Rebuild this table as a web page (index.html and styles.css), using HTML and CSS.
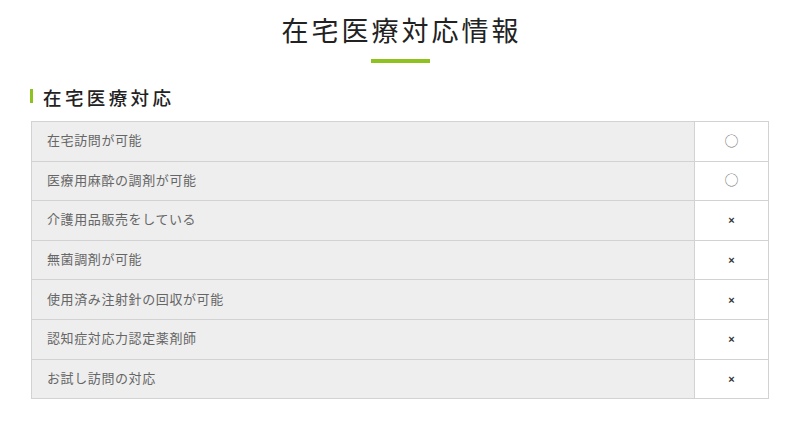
FILE: index.html
```html
<!DOCTYPE html>
<html lang="ja">
<head>
<meta charset="utf-8">
<link rel="stylesheet" href="styles.css">
</head>
<body>
<div class="page">
  <h1 class="title">在宅医療対応情報</h1>
  <div class="title-line"></div>
  <h2 class="sub">在宅医療対応</h2>
  <table class="info">
    <tr><td class="label">在宅訪問が可能</td><td class="mark"><span class="circle">○</span></td></tr>
    <tr><td class="label">医療用麻酔の調剤が可能</td><td class="mark"><span class="circle">○</span></td></tr>
    <tr><td class="label">介護用品販売をしている</td><td class="mark"><span class="cross">×</span></td></tr>
    <tr><td class="label">無菌調剤が可能</td><td class="mark"><span class="cross">×</span></td></tr>
    <tr><td class="label">使用済み注射針の回収が可能</td><td class="mark"><span class="cross">×</span></td></tr>
    <tr><td class="label">認知症対応力認定薬剤師</td><td class="mark"><span class="cross">×</span></td></tr>
    <tr><td class="label">お試し訪問の対応</td><td class="mark"><span class="cross">×</span></td></tr>
  </table>
</div>
</body>
</html>
```

FILE: styles.css
```css
html, body {
  margin: 0;
  padding: 0;
  background: #fff;
}
body {
  font-family: "Noto Sans CJK JP", "Noto Sans", sans-serif;
  color: #222;
}
.page {
  width: 738px;
  margin: 0 auto;
  padding-top: 15px;
}
.title {
  margin: 0;
  text-align: center;
  font-size: 27px;
  font-weight: 400;
  line-height: 30px;
  letter-spacing: 3px;
  padding-left: 3px;
  color: #222;
}
.title-line {
  width: 59px;
  height: 4px;
  background: #8dc21f;
  margin: 14px auto 0;
}
.sub {
  margin: 23px 0 0 -1px;
  font-size: 18.5px;
  font-weight: 500;
  line-height: 22px;
  letter-spacing: 3.4px;
  color: #222;
  display: flex;
  align-items: center;
}
.sub::before {
  content: "";
  width: 3px;
  height: 14px;
  background: #8dc21f;
  margin-right: 10px;
  margin-top: -2px;
}
.info {
  margin-top: 13px;
  width: 738px;
  border-collapse: collapse;
}
.info td {
  border: 1px solid #d2d2d2;
  height: 39.6px;
  padding: 0 0 3px;
  font-size: 13px;
  box-sizing: border-box;
}
.label {
  background: #eeeeee;
  color: #666;
  padding-left: 15px !important;
  letter-spacing: 0.6px;
}
.mark {
  width: 74px;
  text-align: center;
  background: #fff;
  color: #444;
}
.circle {
  font-size: 14px;
  color: #777;
}
.cross {
  font-family: "Liberation Sans", Arial, sans-serif;
  font-size: 11px;
  font-weight: 700;
  color: #333;
}
```
